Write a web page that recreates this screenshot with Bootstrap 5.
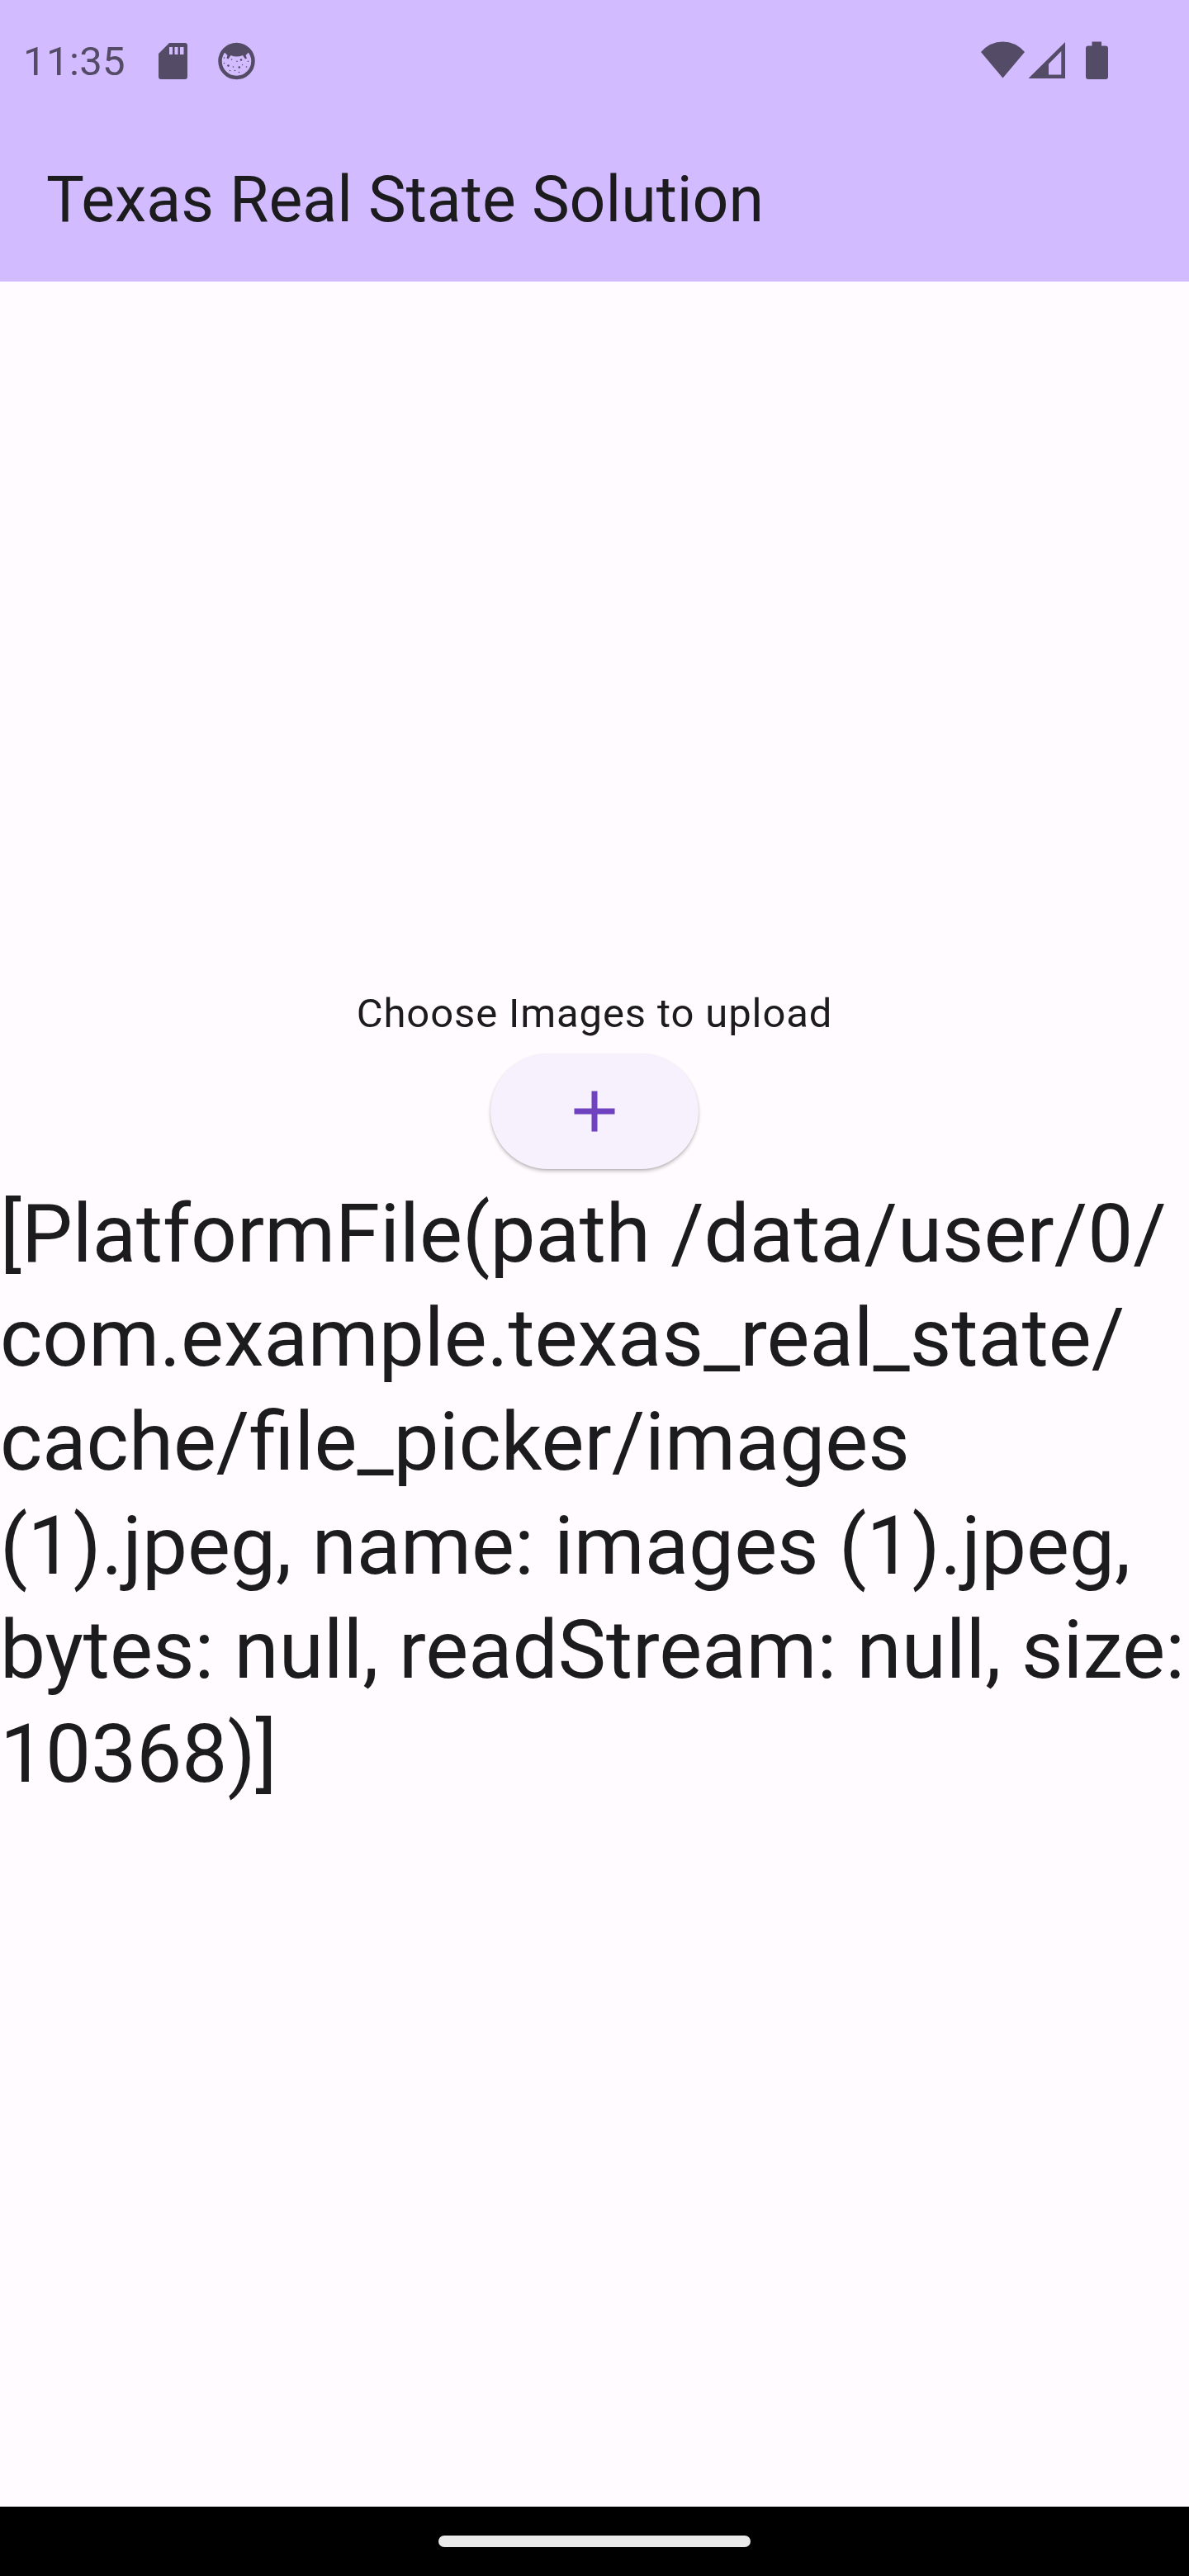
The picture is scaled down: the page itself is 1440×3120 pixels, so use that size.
<!DOCTYPE html>
<html lang="en">
<head>
<meta charset="utf-8">
<meta name="viewport" content="width=device-width, initial-scale=1">
<title>Texas Real State Solution</title>
<link rel="stylesheet" href="https://cdn.jsdelivr.net/npm/bootstrap@5.3.0/dist/css/bootstrap.min.css">
<style>
  body { font-family: Roboto, sans-serif; background: #fffbff; color: #1c1b1e; height: 3120px; overflow: hidden; }
  .top-area { background: #d2bbff; height: 341px; }
  .status-bar { height: 147px; padding: 0 97px 0 28px; color: #544b66; }
  .status-bar svg { display: block; fill: currentColor; }
  .clock { font-size: 49px; line-height: 58px; letter-spacing: .4px; width: 162px; height: 58px; padding-top: 1.5px; }
  .face-icon { margin-left: 34px; }
  .app-title { font-size: 77px; line-height: 98px; padding: 0 56px; margin-top: 46px; font-weight: 400; }
  .page-body { height: 2695px; }
  .hint { font-size: 49px; line-height: 70px; letter-spacing: .875px; height: 70px; padding-top: 1.5px; }
  .add-btn { width: 252px; height: 140px; margin: 14px 0; background: #f6f1fc; border: 0; color: #6f43c0;
    box-shadow: 0 3px 4px rgba(0,0,0,.2), 0 1px 2px rgba(0,0,0,.12); }
  .file-info { font-size: 98px; line-height: 126px; height: 756px; padding-top: 2.5px; }
  .nav-area { height: 84px; background: #000; }
  .home-pill { width: 378px; height: 14px; background: #eaeaea; }
</style>
</head>
<body class="d-flex flex-column m-0">
  <header class="top-area flex-shrink-0">
    <div class="status-bar d-flex align-items-center justify-content-between">
      <div class="d-flex align-items-center">
        <span class="clock">11:35</span>
        <svg width="39" height="46" viewBox="190 50 39 46"><path fill-rule="evenodd" d="M205 51h19a3 3 0 0 1 3 3v38a3 3 0 0 1-3 3h-29a3 3 0 0 1-3-3V64zM205 56v9h4v-9zM211.500 56v9h4v-9zM218 56v9h4.500v-9z"/></svg>
        <svg class="face-icon" width="47" height="46" viewBox="263 50.500 47 46">
          <circle cx="286.500" cy="73.500" r="20" fill="none" stroke="currentColor" stroke-width="4.500"/>
          <path d="M271 62Q277 54 286.500 53.500T302 62L297.500 66.500l1.500 3.500-2 1-3-4.500Q286.500 69.500 279.500 66.500l-3 4.500-2-1 1-3.500z"/>
          <g><circle cx="271.500" cy="69.500" r=".8"/><circle cx="271.500" cy="76" r=".8"/><circle cx="276.500" cy="79" r="1.300"/><circle cx="280.500" cy="71.500" r=".8"/><circle cx="287" cy="73.700" r=".8"/><circle cx="292" cy="72" r="1.300"/><circle cx="300.500" cy="73.700" r=".8"/><circle cx="282.500" cy="80.500" r=".8"/><circle cx="289.800" cy="81" r="1.300"/><circle cx="293.500" cy="78" r=".7"/><circle cx="298.500" cy="80.500" r=".8"/><circle cx="278.500" cy="85" r=".8"/><circle cx="284.500" cy="85" r=".8"/><circle cx="289.500" cy="87" r=".8"/></g>
        </svg>
      </div>
      <svg width="156" height="48" viewBox="1187 49.500 156 48">
        <path d="M1214.500 94L1188 62.500Q1199 50 1214.500 50T1241 62.500z"/>
        <path fill-rule="evenodd" d="M1290 50.500v44h-44.500zM1285.300 61.500L1270 77v13h15.300z"/>
        <path d="M1322.500 50h11.500v5h5a3 3 0 0 1 3 3v34.500a3 3 0 0 1-3 3h-21a3 3 0 0 1-3-3V58a3 3 0 0 1 3-3h4.500z"/>
      </svg>
    </div>
    <h1 class="app-title mb-0">Texas Real State Solution</h1>
  </header>
  <main class="page-body d-flex flex-column align-items-center justify-content-center flex-shrink-0">
    <div class="hint">Choose Images to upload</div>
    <button type="button" class="add-btn rounded-pill d-flex align-items-center justify-content-center p-0" aria-label="Add">
      <svg width="84" height="84" viewBox="0 0 24 24" fill="currentColor"><path d="M19 13h-6v6h-2v-6H5v-2h6V5h2v6h6z"/></svg>
    </button>
    <div class="file-info w-100 text-nowrap">[PlatformFile(path /data/user/0/<br>com.example.texas_real_state/<br>cache/file_picker/images<br>(1).jpeg, name: images (1).jpeg,<br>bytes: null, readStream: null, size:<br>10368)]</div>
  </main>
  <footer class="nav-area d-flex align-items-center justify-content-center flex-shrink-0">
    <div class="home-pill rounded-pill"></div>
  </footer>
<script src="https://cdn.jsdelivr.net/npm/bootstrap@5.3.0/dist/js/bootstrap.bundle.min.js"></script>
</body>
</html>
